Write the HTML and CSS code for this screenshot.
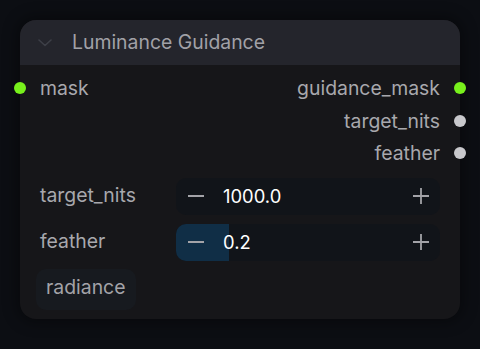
FILE: index.html
```html
<!DOCTYPE html>
<html>
<head>
<meta charset="utf-8">
<link rel="stylesheet" href="styles.css">
</head>
<body>
<div class="canvas">
  <div class="node">
    <div class="node-header">
      <svg class="chevron" width="14" height="8" viewBox="0 0 14 8"><path d="M1 1 L7 6.5 L13 1" fill="none" stroke="#3d3f47" stroke-width="1.6" stroke-linecap="round" stroke-linejoin="round"/></svg>
      <span class="title">Luminance Guidance</span>
    </div>
    <div class="node-body">
      <div class="slots">
        <div class="slot-row">
          <span class="dot dot-in green"></span>
          <span class="slot-label">mask</span>
          <span class="slot-label out">guidance_mask</span>
          <span class="dot dot-out green"></span>
        </div>
        <div class="slot-row">
          <span></span>
          <span class="slot-label out">target_nits</span>
          <span class="dot dot-out grey"></span>
        </div>
        <div class="slot-row">
          <span></span>
          <span class="slot-label out">feather</span>
          <span class="dot dot-out grey"></span>
        </div>
      </div>
      <div class="widgets">
        <div class="widget-row">
          <span class="widget-label">target_nits</span>
          <div class="number">
            <svg class="btn" width="18" height="18" viewBox="0 0 18 18"><path d="M1 9 H17" stroke="#a3a3a8" stroke-width="1.8"/></svg>
            <span class="value">1000.0</span>
            <svg class="btn plus" width="18" height="18" viewBox="0 0 18 18"><path d="M1 9 H17 M9 1 V17" stroke="#a3a3a8" stroke-width="1.8"/></svg>
          </div>
        </div>
        <div class="widget-row">
          <span class="widget-label">feather</span>
          <div class="number">
            <div class="fill" style="width:20%"></div>
            <svg class="btn" width="18" height="18" viewBox="0 0 18 18"><path d="M1 9 H17" stroke="#a3a3a8" stroke-width="1.8"/></svg>
            <span class="value">0.2</span>
            <svg class="btn plus" width="18" height="18" viewBox="0 0 18 18"><path d="M1 9 H17 M9 1 V17" stroke="#a3a3a8" stroke-width="1.8"/></svg>
          </div>
        </div>
      </div>
      <div class="chips">
        <span class="chip">radiance</span>
      </div>
    </div>
  </div>
</div>
</body>
</html>
```
FILE: styles.css
```css
* { box-sizing: border-box; }
html, body {
  margin: 0;
  padding: 0;
  background: #0c0e13;
  width: 480px;
  height: 349px;
  overflow: hidden;
  font-family: Inter, "Liberation Sans", sans-serif;
}
.canvas {
  padding: 20px;
}
.node {
  width: 440px;
  height: 299px;
  border-radius: 16px;
  background: #161619;
  box-shadow: 0 0 14px 4px rgba(0,0,0,0.35);
  position: relative;
}
.node-header {
  height: 45px;
  background: #24252c;
  border-radius: 16px 16px 0 0;
  display: flex;
  align-items: center;
  padding-left: 18px;
  gap: 20px;
}
.chevron { flex: none; }
.title {
  color: #a1a1a7;
  font-size: 19.4px;
  margin-top: -2px;
}
.node-body {
  padding: 7px 20px 0 20px;
}
.slots {
  display: flex;
  flex-direction: column;
}
.slot-row {
  height: 32.5px;
  display: flex;
  align-items: center;
  position: relative;
}
.slot-label {
  color: #a8a8ad;
  font-size: 19.4px;
}
.slot-label.out {
  margin-left: auto;
}
.dot {
  position: absolute;
  width: 12px;
  height: 12px;
  border-radius: 50%;
  top: 50%;
  margin-top: -6px;
}
.dot-in { left: -26px; }
.dot-out { right: -26px; }
.green { background: #78f01c; }
.grey { background: #c8c8cc; }
.widgets {
  margin-top: 8px;
  display: flex;
  flex-direction: column;
  gap: 9px;
}
.widget-row {
  display: flex;
  align-items: center;
  height: 37px;
}
.widget-label {
  width: 136px;
  color: #a8a8ad;
  font-size: 19.4px;
  margin-top: -2px;
}
.number {
  position: relative;
  flex: 1;
  height: 100%;
  background: #111419;
  border-radius: 10px;
  display: flex;
  align-items: center;
  padding: 0 10px 0 11px;
  overflow: hidden;
}
.fill {
  position: absolute;
  left: 0;
  top: 0;
  bottom: 0;
  background: #102e46;
}
.btn { position: relative; flex: none; }
.value {
  position: relative;
  color: #ffffff;
  font-size: 18.4px;
  margin-left: 18px;
}
.plus { margin-left: auto; }
.chips {
  margin-top: 8px;
  margin-left: -4px;
  display: flex;
}
.chip {
  background: #171a1f;
  color: #a3a3a8;
  font-size: 19.4px;
  border-radius: 10px;
  padding: 6px 10px 11px 10px;
}
```
